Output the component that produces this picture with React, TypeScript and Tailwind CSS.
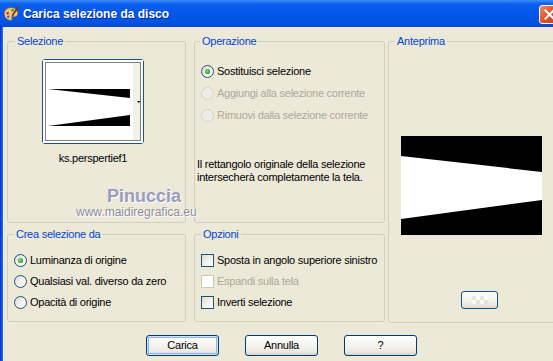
import React from "react";

function Radio({ checked = false, disabled = false }: { checked?: boolean; disabled?: boolean }) {
  return (
    <span
      className={
        "relative inline-block w-[13px] h-[13px] rounded-full border shrink-0 " +
        (disabled
          ? "border-[#D6D3C6] bg-[#EEEDE5]"
          : "border-[#1C5180] bg-[linear-gradient(135deg,#DCD9CF_0%,#F4F3EE_55%,#FFFFFF_100%)]")
      }
    >
      {checked && (
        <span className="absolute left-[3px] top-[3px] w-[5px] h-[5px] rounded-full bg-[radial-gradient(circle_at_40%_40%,#8BE08B_0%,#2FA92F_55%,#1A8A1A_100%)]" />
      )}
    </span>
  );
}

function Check({ disabled = false }: { disabled?: boolean }) {
  return (
    <span
      className={
        "inline-block w-[13px] h-[13px] border shrink-0 " +
        (disabled
          ? "border-[#CAC8BB] bg-[#FFFFFF]"
          : "border-[#1C5180] bg-[linear-gradient(135deg,#DCD9CF_0%,#F4F3EE_55%,#FFFFFF_100%)]")
      }
    />
  );
}

function XPButton({ children, def = false }: { children: React.ReactNode; def?: boolean }) {
  return (
    <div
      className={
        "w-[73px] h-[21px] rounded-[3px] border border-[#003C74] flex items-center justify-center text-[11px] text-black bg-[linear-gradient(180deg,#FFFFFF_0%,#F6F5F1_40%,#ECEBE5_80%,#D9D4CA_100%)] " +
        (def ? "shadow-[inset_0_0_0_1px_#CEE3FF,inset_0_0_0_2px_#8FB3EE]" : "")
      }
    >
      {children}
    </div>
  );
}

function Legend({ children, ml = "ml-[6px]" }: { children: React.ReactNode; ml?: string }) {
  return <legend className={ml + " px-[2px] leading-[13px] text-[11px] text-[#0046D5] whitespace-nowrap"}>{children}</legend>;
}

function PaletteIcon() {
  return (
    <svg width="16" height="16" viewBox="0 0 16 16">
      <path d="M8 1.5C4 1.5 1.2 4.3 1.2 7.8c0 3.6 3 6.6 6.6 6.6 1.4 0 1.6-.9 1.1-1.7-.5-.9 0-1.8 1.1-1.8h1.6c2 0 3.2-1.4 3.2-3.3C14.8 4.1 11.9 1.5 8 1.5z" fill="#E9C48B" stroke="#8A5A2B" strokeWidth="0.8" />
      <circle cx="4.6" cy="7.2" r="1.2" fill="#E02020" />
      <circle cx="6.4" cy="4.4" r="1.2" fill="#F2D21A" />
      <circle cx="9.8" cy="4.2" r="1.2" fill="#2A9A2A" />
      <circle cx="5.2" cy="10.6" r="1.2" fill="#2050D8" />
      <path d="M15 1.2L9.6 9.2" stroke="#6B3A12" strokeWidth="1.6" strokeLinecap="round" />
      <path d="M9.8 8.8l-1.6 2.6 2.4-1.4z" fill="#3A3A3A" />
    </svg>
  );
}

export default function App() {
  return (
    <div className="relative w-[553px] h-[361px] overflow-hidden bg-[#ECE9D8] flex flex-col font-['Liberation_Sans',Arial,sans-serif] text-[11px] tracking-[-0.25px] text-black">
      {/* Title bar */}
      <div className="h-[27px] shrink-0 flex items-center bg-[linear-gradient(180deg,#3D8FF7_0%,#0D61EE_14%,#0457EA_45%,#0254E6_80%,#0847D2_100%)]">
        <div className="ml-[3px] w-[16px] h-[16px] shrink-0">
          <PaletteIcon />
        </div>
        <div className="ml-[4px] text-[12px] font-bold text-white leading-[16px] [text-shadow:1px_1px_0_#0A2E8C] tracking-[0px]">
          Carica selezione da disco
        </div>
        <div className="ml-auto -mr-[7px] mt-[1px] w-[21px] h-[19px] shrink-0 rounded-[3px] border border-white bg-[linear-gradient(135deg,#F08A6A_0%,#E2532F_45%,#C83A1A_100%)] flex items-center justify-center">
          <svg width="11" height="11" viewBox="0 0 11 11">
            <path d="M1.5 1.5L9.5 9.5M9.5 1.5L1.5 9.5" stroke="white" strokeWidth="2" strokeLinecap="square" />
          </svg>
        </div>
      </div>

      <div className="flex flex-1">
        <div className="w-[3px] shrink-0 bg-[linear-gradient(90deg,#0838C8_0%,#0C52E8_60%,#3A7BF2_100%)]" />
        <div className="flex flex-col pl-[4px] pt-[8px]">
          <div className="flex">
            <div className="grid grid-cols-[179px_191px] grid-rows-[188px_94px] gap-x-[8px] gap-y-[5px] shrink-0">
              {/* Selezione */}
              <fieldset className="border border-[#D0D0BF] rounded-[3px] min-w-0">
                <Legend ml="ml-[7px]">Selezione</Legend>
                <div className="ml-[34px] mt-[11px] w-[102px]">
                  <div className="w-[102px] h-[85px] rounded-[3px] border border-[#1C5180] bg-white">
                    <svg width="100" height="83" viewBox="0 0 100 83">
                      <rect x="0" y="0" width="100" height="83" fill="#FFFFFF" />
                      <rect x="90" y="3" width="7" height="77" fill="#F1F0EA" />
                      <polygon points="5,29 87,29 87,38" fill="#000" />
                      <polygon points="5,66 87,55 87,66" fill="#000" />
                      <polygon points="94,41 97.5,41 95.75,43" fill="#000" />
                      <rect x="2.5" y="2.5" width="95" height="78" fill="none" stroke="#000" strokeWidth="1" strokeDasharray="1 1" />
                    </svg>
                  </div>
                  <div className="mt-[8px] leading-[13px] text-center">ks.perspertief1</div>
                </div>
              </fieldset>

              {/* Operazione */}
              <fieldset className="border border-[#D0D0BF] rounded-[3px] min-w-0">
                <Legend ml="ml-[5px]">Operazione</Legend>
                <div className="mt-[12px] pl-[6px] flex flex-col whitespace-nowrap">
                  <div className="h-[22px] flex items-center gap-[3px]">
                    <Radio checked />
                    <span>Sostituisci selezione</span>
                  </div>
                  <div className="h-[22px] flex items-center gap-[3px] text-[#ACA899]">
                    <Radio disabled />
                    <span>Aggiungi alla selezione corrente</span>
                  </div>
                  <div className="h-[22px] flex items-center gap-[3px] text-[#ACA899]">
                    <Radio disabled />
                    <span>Rimuovi dalla selezione corrente</span>
                  </div>
                </div>
                <div className="mt-[32px] pl-[2px] leading-[13px] whitespace-nowrap">
                  Il rettangolo originale della selezione
                  <br />
                  intersecherà completamente la tela.
                </div>
              </fieldset>

              {/* Crea selezione da */}
              <fieldset className="border border-[#D0D0BF] rounded-[3px] min-w-0">
                <Legend>Crea selezione da</Legend>
                <div className="mt-[9px] pl-[6px] flex flex-col whitespace-nowrap">
                  <div className="h-[21px] flex items-center gap-[3px]">
                    <Radio checked />
                    <span>Luminanza di origine</span>
                  </div>
                  <div className="h-[21px] flex items-center gap-[3px]">
                    <Radio />
                    <span>Qualsiasi val. diverso da zero</span>
                  </div>
                  <div className="h-[21px] flex items-center gap-[3px]">
                    <Radio />
                    <span>Opacità di origine</span>
                  </div>
                </div>
              </fieldset>

              {/* Opzioni */}
              <fieldset className="border border-[#D0D0BF] rounded-[3px] min-w-0">
                <Legend>Opzioni</Legend>
                <div className="mt-[9px] pl-[6px] flex flex-col whitespace-nowrap">
                  <div className="h-[21px] flex items-center gap-[3px]">
                    <Check />
                    <span>Sposta in angolo superiore sinistro</span>
                  </div>
                  <div className="h-[21px] flex items-center gap-[3px] text-[#ACA899]">
                    <Check disabled />
                    <span>Espandi sulla tela</span>
                  </div>
                  <div className="h-[21px] flex items-center gap-[3px]">
                    <Check />
                    <span>Inverti selezione</span>
                  </div>
                </div>
              </fieldset>
            </div>

            {/* Anteprima */}
            <fieldset className="ml-[3px] w-[175px] h-[288px] shrink-0 border border-[#D0D0BF] rounded-[3px]">
              <Legend>Anteprima</Legend>
              <div className="ml-[12px] mt-[88px] w-[141px] h-[99px]">
                <svg width="141" height="99" viewBox="0 0 141 99">
                  <rect width="141" height="99" fill="#000" />
                  <polygon points="0,20 141,36 141,64 0,83" fill="#FFF" />
                </svg>
              </div>
              <div className="ml-[72px] mt-[56px] w-[37px] h-[18px] rounded-[3px] border border-[#1C5180] bg-[linear-gradient(180deg,#FFFFFF_0%,#F1F0EB_60%,#DEDAD0_100%)] flex items-center justify-center">
                <div className="grid grid-cols-4 grid-rows-2 w-[16px] h-[8px] opacity-60">
                  <span className="bg-[#DCDCDC]" />
                  <span className="bg-white" />
                  <span className="bg-[#DCDCDC]" />
                  <span className="bg-white" />
                  <span className="bg-white" />
                  <span className="bg-[#DCDCDC]" />
                  <span className="bg-white" />
                  <span className="bg-[#DCDCDC]" />
                </div>
              </div>
            </fieldset>
          </div>

          {/* Buttons */}
          <div className="mt-[12px] ml-[139px] flex gap-[26px]">
            <XPButton def>Carica</XPButton>
            <XPButton>Annulla</XPButton>
            <XPButton>?</XPButton>
          </div>
        </div>
      </div>

      {/* Watermark */}
      <div className="absolute left-[107px] top-[187px] text-[18px] leading-[18px] font-bold tracking-[0px] text-[#9C9CB6] [text-shadow:1px_1px_0_#FFFFFF,-1px_-1px_0_#E6E6EE]">
        Pinuccia
      </div>
      <div className="absolute left-[76px] top-[205px] text-[12px] leading-[14px] tracking-[0px] text-[#8C8C98] [text-shadow:1px_1px_0_#FFFFFF,-1px_0_0_#F4F4F4]">
        www.maidiregrafica.eu
      </div>
    </div>
  );
}
